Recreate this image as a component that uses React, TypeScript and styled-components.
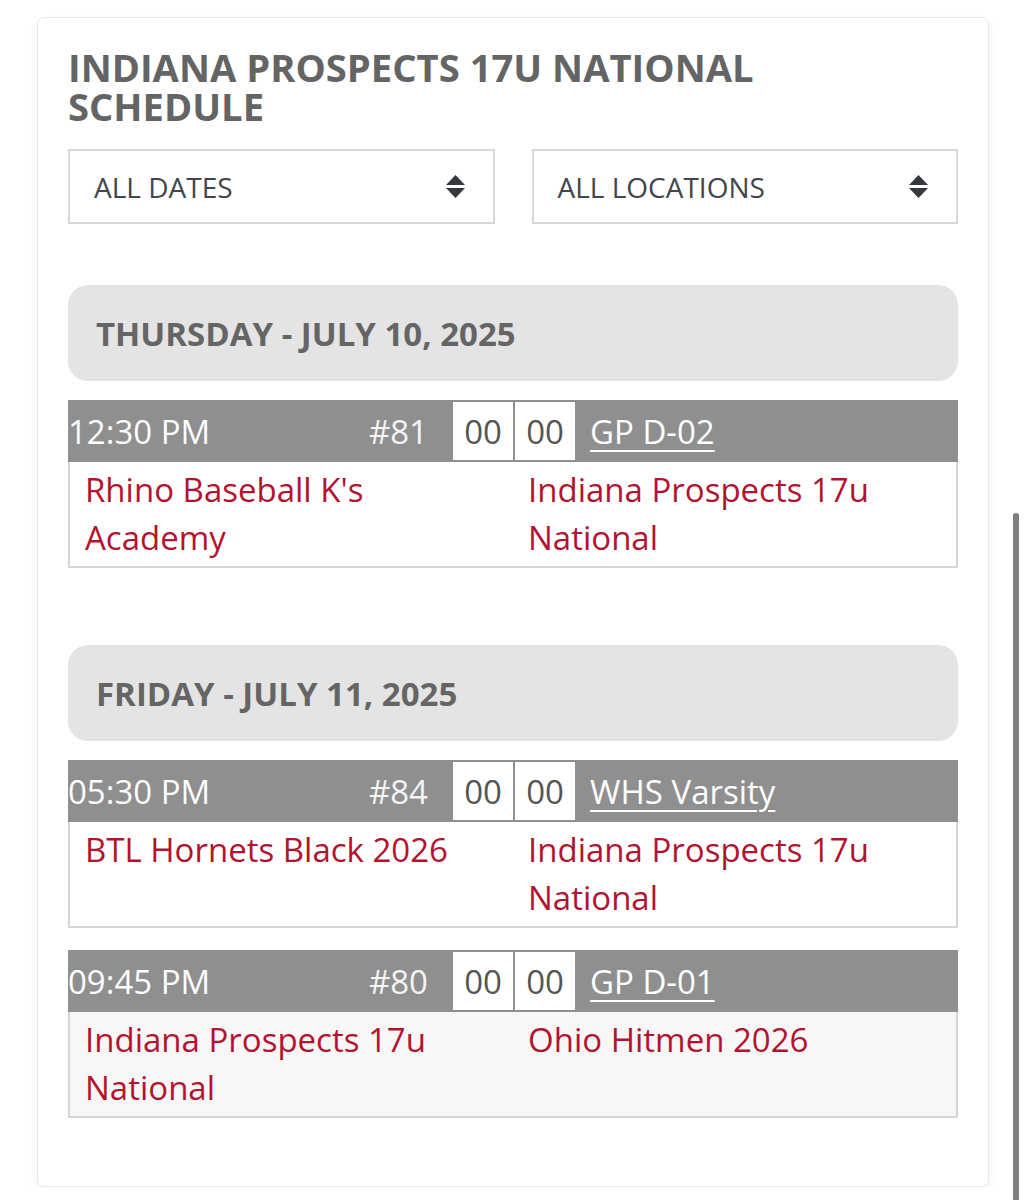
import React from "react";
import styled, { createGlobalStyle } from "styled-components";

const Global = createGlobalStyle`
  html, body { margin: 0; padding: 0; background: #ffffff; overflow: hidden; }
  body { font-family: "Open Sans", "Noto Sans", sans-serif; }
  * { box-sizing: border-box; }
`;

const Page = styled.div`
  padding: 17px 37px 0;
`;

const Card = styled.section`
  border: 1.5px solid #e8e8e8;
  border-radius: 7px;
  background: #fff;
  box-shadow: 0 5px 10px rgba(0, 0, 0, 0.05);
  padding: 30px 30px 46px;
`;

const Title = styled.h1`
  margin: 0 0 24px;
  font-size: 38.2px;
  line-height: 38.5px;
  font-weight: 700;
  color: #646464;
  text-transform: uppercase;
  max-width: 760px;
`;

const Filters = styled.div`
  display: grid;
  grid-template-columns: 1fr 1fr;
  gap: 37px;
  margin-bottom: 61px;
`;

const Select = styled.div`
  height: 75px;
  border: 2px solid #d4d7db;
  display: flex;
  align-items: center;
  justify-content: space-between;
  padding: 0 28px 0 24px;
  font-size: 28px;
  color: #43464b;
  text-transform: uppercase;
`;

const Arrows = () => (
  <svg width="19" height="23" viewBox="0 0 19 23">
    <polygon points="9.5,0 19,10 0,10" fill="#34373b" />
    <polygon points="0,13 19,13 9.5,23" fill="#34373b" />
  </svg>
);

const Day = styled.div`
  display: flow-root;
  margin-bottom: 55px;
  &:last-child { margin-bottom: 0; }
`;

const DayHeader = styled.h2`
  margin: 0 0 19px;
  height: 96px;
  display: flex;
  align-items: center;
  padding: 0 28px;
  background: #e4e4e4;
  border-radius: 20px;
  font-size: 33px;
  font-weight: 700;
  color: #656565;
  text-transform: uppercase;
`;

const Game = styled.div`
  margin-bottom: 22px;
`;

const GameBar = styled.div`
  display: grid;
  grid-template-columns: 1fr 1fr;
  height: 62px;
  background: #8f8f8f;
  color: #ffffff;
  font-size: 33px;
`;

const BarHalf = styled.div<{ $right?: boolean }>`
  display: flex;
  align-items: center;
  padding-left: ${(p) => (p.$right ? "2px" : "0")};
`;

const Time = styled.span`
  flex: 1;
  white-space: nowrap;
`;

const GameNo = styled.span`
  margin-right: 25px;
  color: #f4f4f4;
`;

const Score = styled.span`
  width: 60px;
  height: 58px;
  background: #ffffff;
  color: #555555;
  display: flex;
  align-items: center;
  justify-content: center;
`;

const Location = styled.a`
  margin-left: 15px;
  color: #ffffff;
  text-decoration: underline;
  text-decoration-thickness: 2px;
  text-underline-offset: 6px;
  white-space: nowrap;
`;

const GameBody = styled.div<{ $alt?: boolean }>`
  display: grid;
  grid-template-columns: 1fr 1fr;
  border: 2px solid #d6d6d6;
  border-top: none;
  background: ${(p) => (p.$alt ? "#f7f7f7" : "#ffffff")};
  padding: 4px 0;
`;

const Team = styled.div`
  padding: 0 15px;
  font-size: 33px;
  line-height: 48px;
  color: #b3132f;
`;

const ScrollThumb = styled.div`
  position: fixed;
  right: 7px;
  top: 513px;
  width: 6px;
  height: 720px;
  border-radius: 3px;
  background: #7f7f7f;
`;

type GameT = {
  time: string;
  no: string;
  loc: string;
  home: string;
  away: string;
};

const days: { label: string; games: GameT[] }[] = [
  {
    label: "Thursday - July 10, 2025",
    games: [
      {
        time: "12:30 PM",
        no: "#81",
        loc: "GP D-02",
        home: "Rhino Baseball K's Academy",
        away: "Indiana Prospects 17u National",
      },
    ],
  },
  {
    label: "Friday - July 11, 2025",
    games: [
      {
        time: "05:30 PM",
        no: "#84",
        loc: "WHS Varsity",
        home: "BTL Hornets Black 2026",
        away: "Indiana Prospects 17u National",
      },
      {
        time: "09:45 PM",
        no: "#80",
        loc: "GP D-01",
        home: "Indiana Prospects 17u National",
        away: "Ohio Hitmen 2026",
      },
    ],
  },
];

export default function App() {
  return (
    <>
      <Global />
      <Page>
        <Card>
          <Title>Indiana Prospects 17U National Schedule</Title>
          <Filters>
            <Select>
              <span>All Dates</span>
              <Arrows />
            </Select>
            <Select>
              <span>All Locations</span>
              <Arrows />
            </Select>
          </Filters>
          {days.map((d) => (
            <Day key={d.label}>
              <DayHeader>{d.label}</DayHeader>
              {d.games.map((g, i) => (
                <Game key={g.no}>
                  <GameBar>
                    <BarHalf>
                      <Time>{g.time}</Time>
                      <GameNo>{g.no}</GameNo>
                      <Score>00</Score>
                    </BarHalf>
                    <BarHalf $right>
                      <Score>00</Score>
                      <Location href="#">{g.loc}</Location>
                    </BarHalf>
                  </GameBar>
                  <GameBody $alt={i % 2 === 1}>
                    <Team>{g.home}</Team>
                    <Team>{g.away}</Team>
                  </GameBody>
                </Game>
              ))}
            </Day>
          ))}
        </Card>
      </Page>
      <ScrollThumb />
    </>
  );
}
